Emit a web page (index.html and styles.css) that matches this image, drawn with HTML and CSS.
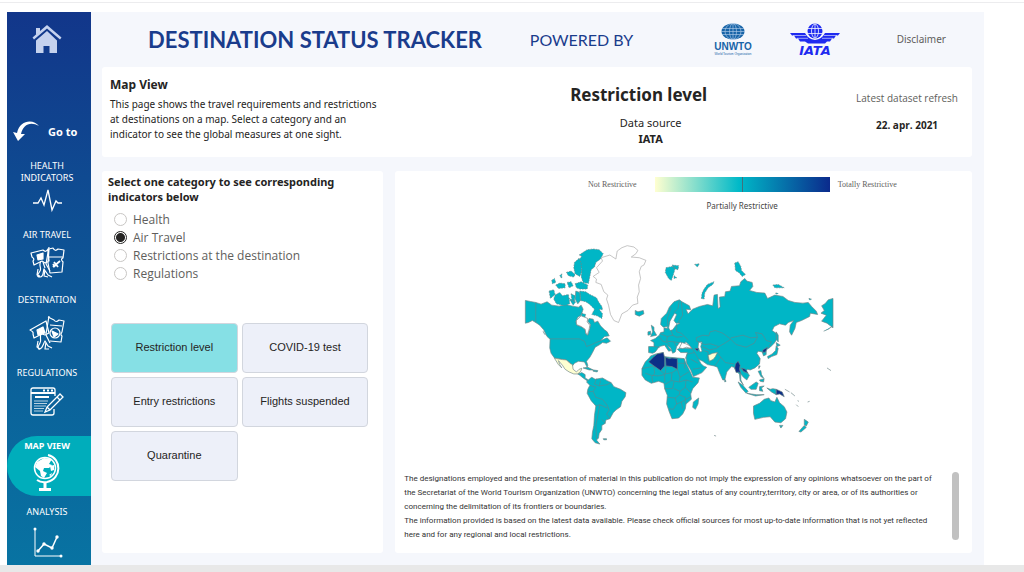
FILE: index.html
```html
<!DOCTYPE html>
<html lang="en">
<head>
<meta charset="utf-8">
<title>Destination Status Tracker</title>
<link rel="stylesheet" href="styles.css">
</head>
<body>
<div class="topline"></div>
<div class="page">
  <nav class="side">
    <a class="home" href="#" aria-label="Home">
      <svg width="30" height="30" viewBox="0 0 30 30" fill="#c5d2ee"><path d="M4 3h4v4L4 10z"/><path d="M15 0 0.500 12.500 2 14.500 15 3.500 28 14.500 29.500 12.500z"/><path d="M15 6 4 15.500V28h7.500v-7h6v7H25V15.500z"/></svg>
    </a>
    <div class="goto">
      <svg width="27" height="22" viewBox="0 0 27 22" fill="#fff"><path d="M26 6C21-1 7-1 4 13L0 12 5 21 12 14 8 14C10 5 17 1 26 6Z"/></svg>
      <span>Go to</span>
    </div>
    <a class="item" href="#">Health<br>Indicators
      <svg width="30" height="26" viewBox="0 0 30 26" fill="none" stroke="#fff" stroke-width="1.300"><path d="M1 15h5l3-5 3 7 4-15 4 20 4-9 2 2h4"/></svg>
    </a>
    <a class="item" href="#">Air Travel
      <svg class="ticket" width="36" height="34" viewBox="0 0 36 34"><path d="M2 8 14 5q3 3 5-1l1 12-4 2-3-2-8 4-1-4q2-2-1-4zM20 4l4-1q2 4 5 1l6 1-1 8q-3 1 0 4l-1 10-12 1-2-10zM20 12h14"/><path d="M24 22l7-6M25 17l4 5M24 19l2 3" stroke-width="1.800"/><path d="M20 2l-3 17M12 16c-3 4 1 7-1 10s-4 6 0 6 3-6 4-8l4 6 4 2M14 17l2 6M16 25l-1 6 4 1M9 24l-1 6 3 1M17 19l4 7"/><path d="M8 10l6-2v6l-5 1z" fill="#fff"/></svg>
    </a>
    <a class="item wide" href="#">Destination
      <svg class="ticket" width="36" height="38" viewBox="0 0 36 38"><path d="M1 16 17 7l3 12-4 2-3-1-8 4-1-4q1-2-3-4zM19 3l6 3q2 3 5 0l5 1-2 11q-2 3 0 4l-1 6-11-1M21 11l12 1"/><circle cx="26" cy="19" r="5"/><path d="M23 17l6 3-4 3z" fill="#fff"/><path d="M20 2l-3 18M12 20c-2 4 1 6-1 9s-3 7 0 6 3-5 5-8l3 5 4 2M17 28l-1 7 4 0M9 27l-1 6 3 2M17 21l4 8"/><path d="M8 16l6-3 2 6-7 2z" fill="#fff"/></svg>
    </a>
    <a class="item wide" href="#">Regulations
      <svg width="36" height="30" viewBox="0 0 36 30" fill="none" stroke="#fff" stroke-width="1.300"><path d="M25 22v4q0 2-2 2H4q-2 0-2-2V3q0-2 2-2h20q2 0 2 2v6"/><path d="M2 6h24M14 3.500h2M18 3.500h2M22 3.500h2" stroke-width="2"/><path d="M6 10h14" stroke-width="2"/><path d="M5 14h14M5 16.500h13M5 19h12M5 21.500h10M5 24h9" stroke-width="1" opacity=".7"/><path d="M31 7l3 3-13 13-5 2 2-5zM28 10l3 3M18 20l3 3" fill="#0b639b"/></svg>
    </a>
    <a class="item active" href="#" aria-current="page">Map View
      <svg width="30" height="38" viewBox="0 0 30 38" fill="none" stroke="#fff" stroke-width="2"><circle cx="13" cy="14" r="10.500" stroke-width="1.500"/><path d="M16 1c14 3 14 24-1 27q-6 1-10-2" /><path d="M13 28v6M7 35.500h12" stroke-width="3"/><path d="M5 8l7-4 8 1-3 5 3 1-3 3-5 0-1 3 4 2-3 5-3-2-1-5-5-4zM18 12l4-1v5l-3 1zM17 21l3-2-1 3z" fill="#fff" stroke="none"/></svg>
    </a>
    <a class="item wide" href="#">Analysis
      <svg width="32" height="34" viewBox="0 0 32 34" fill="none" stroke="#fff" stroke-width="1"><path d="M4 3v27h26"/><path d="M7 25l6-7 8 4 5-11" stroke-width="1.500"/><g fill="#fff" stroke="none"><circle cx="4" cy="3" r="1.500"/><circle cx="30" cy="30" r="1.500"/><circle cx="7" cy="25" r="1.700"/><circle cx="13" cy="18" r="1.700"/><circle cx="21" cy="22" r="1.700"/><circle cx="26" cy="11" r="1.700"/></g></svg>
    </a>
  </nav>
  <div class="main">
    <header class="head">
      <h1>DESTINATION STATUS TRACKER</h1>
      <span class="powered">POWERED BY</span>
      <svg width="40" height="34" viewBox="0 0 40 34" role="img" aria-label="UNWTO"><ellipse cx="20" cy="8.500" rx="11.500" ry="8" fill="#1764a8"/><g fill="none" stroke="#b9d2ec" stroke-width=".6"><ellipse cx="20" cy="8.500" rx="3.500" ry="8"/><ellipse cx="20" cy="8.500" rx="8" ry="8"/><path d="M20 0v17M9 5.500h22M8 8.500h24M9 11.500h22"/></g><text x="20" y="27" text-anchor="middle" class="unwto">UNWTO</text><text x="20" y="32" text-anchor="middle" class="unwto-sub">World Tourism Organization</text></svg>
      <svg width="50" height="34" viewBox="0 0 50 34" role="img" aria-label="IATA"><circle cx="25" cy="8" r="7.500" fill="#1f2bf0"/><g fill="none" stroke="#f5f7fc" stroke-width=".8"><ellipse cx="25" cy="8" rx="3.500" ry="7"/><path d="M25 1v14M18 5.500h14M18 10.500h14"/></g><path d="M0 10h15q3 6 10 7 7-1 10-7h15l-2 2.500h-2l-2 3h-2l-2 3h-3l-2 2H18l-3-2h-5l-2-3H6l-2-3H2z" fill="#1f2bf0"/><path d="M3 12.500h13M7 15.300h11M47 12.500H34M43 15.300H32" stroke="#f5f7fc" stroke-width=".6"/><text x="25" y="32" text-anchor="middle" class="iata">IATA</text></svg>
      <a class="disclaimer" href="#">Disclaimer</a>
    </header>

    <section class="card info">
      <div class="intro">
        <h2>Map View</h2>
        <p>This page shows the travel requirements and restrictions<br>at destinations on a map. Select a category and an<br>indicator to see the global measures at one sight.</p>
      </div>
      <div class="level">
        <h2>Restriction level</h2>
        <p>Data source<br><b>IATA</b></p>
      </div>
      <div class="refresh"><span>Latest dataset refresh</span><b>22. apr. 2021</b></div>
    </section>

    <section class="card filters">
      <fieldset>
        <legend>Select one category to see corresponding<br>indicators below</legend>
        <label><input type="radio" name="category">Health</label>
        <label><input type="radio" name="category" checked>Air Travel</label>
        <label><input type="radio" name="category">Restrictions at the destination</label>
        <label><input type="radio" name="category">Regulations</label>
      </fieldset>
      <div class="tiles">
        <button type="button" class="on">Restriction level</button>
        <button type="button">COVID-19 test</button>
        <button type="button">Entry restrictions</button>
        <button type="button">Flights suspended</button>
        <button type="button">Quarantine</button>
      </div>
    </section>

    <section class="card mapcard">
      <div class="scale">
        <span class="low">Not Restrictive</span><span class="bar"></span><span class="high">Totally Restrictive</span>
        <span class="mid">Partially Restrictive</span>
      </div>
      <svg class="map" viewBox="520 240 328 208" role="img" aria-label="World map of restriction levels">
        <g transform="translate(520 235) scale(.33333)" class="land">
          <path d="M19 196 34 199 50 202 66 207 84 200 98 210 120 213 140 208 160 213 178 216 186 210 192 222 186 240 176 246 170 260 174 270 190 276 198 284 200 296 206 300 212 280 214 268 206 258 210 250 222 252 226 262 236 258 244 272 256 284 264 290 270 302 256 304 244 316 264 308 274 318 262 324 250 322 242 328 228 336 220 352 212 366 202 378 206 390 204 396 196 380 178 378 166 384 160 392 150 380 140 374 106 368 96 354 92 338 93 312 84 304 74 284 62 270 50 262 40 256 28 262 19 264Z"/>
          <path class="isle" d="M188 64 180 60 204 44 222 42 240 44 252 56 244 72 230 82 226 96 216 104 212 124 208 145 192 142 186 124 188 100 176 92 180 74Z"/>
          <path class="isle" d="M180 70 186 84 188 108 182 124 168 116 164 98 166 82ZM182 168 200 170 212 178 232 188 238 200 248 214 250 224 240 222 250 236 248 250 234 242 218 238 226 222 212 208 200 200 184 196ZM108 180 122 172 130 182 148 178 150 192 152 206 136 212 112 206 104 192ZM90 168 104 164 108 178 94 190ZM156 176 168 182 166 200 158 196ZM168 146 186 140 206 150 204 162 182 162 172 158ZM110 150 122 144 138 146 138 158 118 160ZM142 112 156 108 168 118 164 126 148 122ZM98 136 106 130 110 142 100 146ZM122 122 128 116 128 130ZM144 142 156 140 162 152 150 158ZM150 190 170 200 162 210ZM188 234 200 238 196 248 186 244Z"/>
          <path d="M170 168 182 172 184 196 176 206 168 192Z"/>
          <path class="water" d="M186 242 206 250 204 260 212 270 210 282 205 298 200 294 198 282 186 274 172 268 172 256Z"/>
          <path class="none" d="M298 262 284 256 274 238 268 210 262 192 266 180 254 170 246 148 230 142 232 132 222 124 240 112 232 98 250 78 246 68 272 60 290 72 294 48 308 38 324 32 344 36 356 46 350 56 336 66 360 68 380 76 374 90 366 94 360 110 364 130 358 150 360 170 354 186 356 205 340 210 326 226 308 236Z"/>
          <path class="low-fill" d="M106 369 130 373 142 374 152 384 160 388 162 402 172 410 180 402 188 399 185 408 176 416 164 416 150 410 138 402 130 390 118 376 122 388 128 398 118 388Z"/>
          <path d="M176 416 188 412 198 418 198 428 208 434 206 438 192 428 182 420ZM192 398 206 396 222 404 210 404ZM222 404 236 406 234 410 222 408ZM72 288 76 296 80 300"/>
          <path d="M202 440 212 430 218 426 228 432 250 428 264 436 276 442 284 454 304 462 320 472 318 484 308 498 304 514 290 524 282 532 272 550 260 554 258 564 248 570 248 582 240 594 238 608 232 614 242 626 228 622 218 610 220 590 224 570 226 540 230 512 216 496 204 474 206 462 212 450Z"/>
          <path d="M348 226 356 230 372 226 374 236 360 243 348 238ZM252 610h10v3h-8z"/>
          <path class="border" d="M50 202V262M93 311H180L196 318 202 334 218 328 230 322 244 317M232 430 226 446 240 452 264 448 276 442M206 470 222 468 230 486 250 492 264 510 270 524 262 536 272 550M212 450 230 456 222 468M230 512 242 508 264 518M242 508 236 540 230 570 232 612M258 564 248 552M240 452 244 436"/>
        </g>
        <g transform="translate(640 235) scale(.33333)" class="land">
          <path class="isle" d="M80 98 98 94 108 98 104 112 96 136 88 130 78 112ZM98 90 118 92 116 104 104 100ZM104 122 112 128 104 130ZM166 88 180 86 174 96ZM186 190 188 174 194 162 204 148 224 140 220 148 206 158 196 174 194 192ZM286 84 296 80 304 94 306 106 318 118 308 124 300 114 288 106ZM400 150 416 148 434 158 406 158ZM508 190 516 192 510 195ZM408 174 416 174 412 178Z"/>
          <path d="M64 268 66 250 82 234 90 216 104 200 120 194 128 200 150 212 154 224 140 222 146 236 160 222 180 214 204 208 220 212 224 180 234 178 236 220 242 216 240 186 256 184 258 170 272 168 276 154 300 152 304 140 316 130 322 138 338 142 340 154 330 166 352 172 376 174 384 190 406 180 430 184 446 196 466 202 490 204 506 202 516 214 530 228 534 238 512 234 510 244 486 256 470 262 466 280 456 300 450 290 452 270 462 256 446 262 438 270 420 266 404 274 398 286 412 296 412 312 404 324 392 336 380 344 380 358 372 362 368 350 356 348 352 354 362 370 360 386 346 398 332 404 324 402 320 408 330 420 322 434 312 426 304 416 304 434 312 450 302 436 300 416 290 408 284 396 276 394 262 410 256 434 250 434 240 412 234 396 224 392 204 388 190 378 178 372 184 384 192 392 202 396 188 412 162 424 154 404 142 384 140 368 144 352 124 352 114 342 124 338 158 340 148 328 140 320 132 326 122 320 112 334 108 350 100 354 94 338 84 330 96 346 88 348 76 330 60 334 48 350 40 354 28 352 28 334 44 334 44 322 34 316 48 310 60 300 64 292 74 290 74 278 84 280 84 274 72 276Z"/>
          <path d="M36 270 44 276 44 286 52 300 34 304 40 290ZM26 290 34 288 34 298 26 300ZM410 290 416 300 416 320 410 312ZM410 322 422 330 412 334ZM384 364 398 356 408 346 410 332 416 340 412 358 396 364 386 370ZM580 190 566 194 556 206 546 212 554 226 544 234 560 240 546 258 562 264 580 278ZM580 272 566 282 552 288"/>
          <path d="M34 362 50 356 72 352 74 364 90 366 114 368 134 370 140 384 150 404 160 426 180 428 176 442 160 460 154 476 156 492 140 506 138 520 130 536 118 548 98 550 90 530 82 506 84 480 76 460 74 444 58 438 36 444 18 434 8 420 8 400 18 380 30 368ZM162 500 178 488 176 506 168 522 160 516Z"/>
          <path class="water" d="M120 338 128 322 140 326 152 332 156 340 142 336 130 340ZM178 320 188 320 184 334 188 348 182 350 176 336ZM88 278 92 258 106 234 112 238 104 256 110 264 122 264 110 270 100 284 92 286Z"/>
          <path d="M296 440 310 450 326 468 320 474 304 456ZM328 456 350 440 356 444 350 462 334 462ZM322 474 350 478 374 478 348 482ZM360 454 374 452 366 458 370 468 360 466ZM356 408 364 406 366 418 372 428 364 424ZM360 434 374 430 372 440 362 438ZM382 458 392 462 400 460 410 462 410 478 396 470ZM358 392 362 392 358 400ZM256 432 260 438 256 440ZM342 512 360 504 374 492 388 488 394 496 406 500 412 486 420 502 434 514 442 530 438 550 424 562 406 560 392 544 372 546 346 552 342 534ZM420 570 430 570 424 578ZM494 552 506 560 500 572 494 568ZM478 588 494 570 500 576 484 590ZM436 462 450 470M454 472 466 482M474 496 478 498M504 500 510 498M470 508 476 514M562 398 574 406M224 600 230 602"/>
          <path class="border" d="M120 196 116 220 104 232M126 200 130 240 116 262M96 216 84 250 86 272M112 266 112 290 126 294 146 314M64 296 84 304 100 300 112 306 130 304M60 304 70 318 84 322 92 330M84 304 82 318 104 320 120 322M100 300 96 286M44 334 62 336M104 320 110 334M170 308 190 300 208 302 212 290 228 286 250 294 274 312 256 324 238 334 214 326 196 328 172 318ZM274 308 292 304 310 300 334 308 354 306 348 292 368 296 380 316 396 320 388 334M274 312 290 328 320 336 344 324 354 306M188 334 210 344 230 340 238 334M158 340 166 352 144 356 138 370M166 352 178 372M192 346 206 350 206 372 212 382M234 352 244 366 258 382 284 386M244 366 232 384 226 392M154 372 176 384M160 402 184 398M302 398 316 412M8 400 28 396 44 392 46 414 38 424 40 442M64 406 76 416 76 440M80 392 78 416 98 412 114 402V384H138M18 414 36 420 56 422 76 418M98 412 96 436 76 448M114 402 122 426 148 410M96 436 120 440 122 426M120 440 140 434 160 440M140 434 138 456 154 472M76 460 100 460 104 440M104 460 122 468 138 456M84 486 108 488 120 478 122 468M108 488 112 506 126 500 154 484M112 506 102 522 90 520M126 500 130 520M120 478 138 486 138 506M136 370V400"/>
          <g class="high-fill"><path d="M28 380 44 364 54 356 72 352 76 368 76 392 64 406 44 392ZM78 366 90 370 98 368 114 370 114 402 98 394 80 392ZM288 386 296 378 302 390 300 402 304 416 298 410 290 412 286 398ZM306 398 318 402 326 414 312 408ZM370 344 384 336 378 350 370 352ZM166 340 178 340 174 348ZM410 462 428 470 434 484 420 476 410 478Z"/></g>
          <path class="low-fill" d="M206 360 220 354 234 352 228 364 222 372 210 378Z"/>
        </g>
      </svg>
      <div class="notice">
        <p>The designations employed and the presentation of material in this publication do not imply the expression of any opinions whatsoever on the part of<br>the Secretariat of the World Tourism Organization (UNWTO) concerning the legal status of any country,territory, city or area, or of its authorities or<br>concerning the delimitation of its frontiers or boundaries.<br>The information provided is based on the latest data available. Please check official sources for most up-to-date information that is not yet reflected<br>here and for any regional and local restrictions.</p>
        <div class="thumb"></div>
      </div>
    </section>
  </div>
</div>
<div class="bottom"></div>
</body>
</html>
```
FILE: styles.css
```css
* { box-sizing: border-box; }
body {
  margin: 0;
  min-height: 100vh;
  display: flex;
  flex-direction: column;
  background: #fff;
  color: #252423;
  font-family: "Noto Sans", "Open Sans", sans-serif;
  font-size: 11px;
  line-height: 15px;
}
h1, h2, p, fieldset { margin: 0; padding: 0; border: 0; }
a { color: inherit; text-decoration: none; }
.topline { height: 12px; background: linear-gradient(#fff 2px, #ececee 2px, #ececee 3px, #fff 3px); }
.page { flex: 1; display: flex; margin: 0 40px 0 7px; }
.bottom { height: 7px; background: #e8e8e8; }

.side {
  width: 84px;
  flex: none;
  display: flex;
  flex-direction: column;
  color: #fff;
  background: linear-gradient(#12368a, #0f4a91 30%, #0b639b 70%, #0873a2);
}
.home { display: flex; justify-content: center; padding: 13px 4px 0 0; height: 106px; }
.goto { display: flex; align-items: center; gap: 8px; padding-left: 6px; height: 26px; margin-bottom: 16px; font-size: 11px; font-weight: 700; }
.item {
  display: flex;
  flex-direction: column;
  align-items: center;
  padding-right: 4px;
  margin-bottom: 15px;
  text-align: center;
  text-transform: uppercase;
  font-size: 9px;
  line-height: 12px;
}
.item:last-child { margin-bottom: 0; }
.item svg { margin-top: 4px; }
.wide svg { margin-top: 8px; }
.ticket { fill: none; stroke: #fff; stroke-width: 1.2px; stroke-linejoin: round; }
.active {
  padding: 4px 4px 0 0;
  margin: 4px 0 10px;
  height: 60px;
  border-radius: 30px 0 0 30px;
  background: #00adbb;
  font-weight: 700;
}
.active svg { margin-top: 2px; }

.main {
  flex: 1;
  min-width: 0;
  display: grid;
  grid-template-columns: minmax(0, 281fr) minmax(0, 576fr);
  grid-template-rows: 55px 90px 1fr;
  column-gap: 12px;
  padding: 0 12px 12px 11px;
  background: #f5f7fc;
}
.head {
  grid-column: 1 / -1;
  display: grid;
  grid-template-columns: 383fr 184fr 77fr 107fr auto;
  align-items: center;
  padding: 0 26px 0 46px;
}
.head h1 { font: 700 22px/28px Lato, sans-serif; color: #1a3c8c; white-space: nowrap; }
.powered { font: 400 16px/28px Lato, sans-serif; color: #1a3c8c; }
.unwto { font: 700 10px "Liberation Sans", sans-serif; fill: #1764a8; }
.unwto-sub { font: 400 3px "Liberation Sans", sans-serif; fill: #1764a8; }
.iata { font: italic 700 13px "DejaVu Sans", sans-serif; fill: #1f2bf0; }
.disclaimer { font-size: 10px; color: #605e5c; }

.card { background: #fff; border-radius: 3px; }
.info {
  grid-column: 1 / -1;
  display: grid;
  grid-template-columns: 2fr 220px 1fr;
  padding: 0 14px 0 8px;
}
.intro { padding-top: 10px; font-size: 10px; }
.intro h2 { font-size: 12px; line-height: 16px; margin-bottom: 4px; }
.level { padding-top: 16px; text-align: center; }
.level h2 { font-size: 17px; line-height: 24px; margin-bottom: 8px; }
.level p { line-height: 16px; padding-left: 24px; }
.refresh { justify-self: end; padding-top: 24px; display: grid; align-content: start; gap: 12px; text-align: center; font-family: "Open Sans", sans-serif; font-size: 10px; }
.refresh span { color: #605e5c; }

.filters { margin-top: 14px; padding: 3px 15px 0 6px; }
.filters legend { padding: 0; font-weight: 700; margin-bottom: 6px; }
.filters label { display: flex; align-items: center; gap: 6px; height: 18px; padding-left: 6px; font-family: "Open Sans", sans-serif; font-size: 12px; color: #605e5c; }
.filters input {
  appearance: none;
  margin: 0;
  width: 13px;
  height: 13px;
  border: 1px solid #c8c6c4;
  border-radius: 50%;
}
.filters input:checked { border-color: #252423; background: radial-gradient(#252423 4px, #fff 5px); }
.tiles { display: grid; grid-template-columns: 1fr 1fr; gap: 4px; margin-top: 41px; padding-left: 3px; }
.tiles button {
  height: 50px;
  padding: 0 0 2px;
  border: 1px solid #d2d6de;
  border-radius: 4px;
  background: #edf0f9;
  color: #252423;
  font: 11px "Liberation Sans", sans-serif;
}
.tiles .on { background: #86e0e5; }

.mapcard { margin-top: 14px; display: flex; flex-direction: column; }
.scale {
  display: grid;
  grid-template-columns: 1fr 175px 1fr;
  column-gap: 8px;
  align-items: center;
  padding: 6px 0 0 117px;
  font: 8px/14px "Liberation Serif", serif;
  color: #605e5c;
}
.scale .low { text-align: right; padding-right: 10px; }
.scale .bar {
  height: 15px;
  background: linear-gradient(90deg, transparent 87px, #41707c 87px, #41707c 88px, transparent 88px), linear-gradient(90deg, #ffffd0, #00b9c8 48%, #0b2a8c);
}
.scale .mid { grid-column: 2; text-align: center; margin-top: 7px; font-family: "Noto Sans", sans-serif; color: #444; }
.map { display: block; width: 57%; margin: 27px auto 24px; }
.land path { fill: #00b6c6; stroke: #6f8587; stroke-width: 2px; stroke-linejoin: round; }
.land .isle { stroke-dasharray: 5 3; }
.land .water { fill: #fff; }
.land .none { fill: #fff; stroke: #aaa; }
.land .border { fill: none; stroke: #5b8990; }
.land .low-fill { fill: #ffffd2; }
.land .high-fill path { fill: #0c2f87; }
.notice { display: flex; justify-content: space-between; padding: 0 13px 0 9px; }
.notice p { font-family: Roboto, sans-serif; font-size: 8px; line-height: 14px; white-space: nowrap; color: #333; }
.thumb { width: 7px; height: 68px; flex: none; border-radius: 4px; background: #c1c1c1; }
```
